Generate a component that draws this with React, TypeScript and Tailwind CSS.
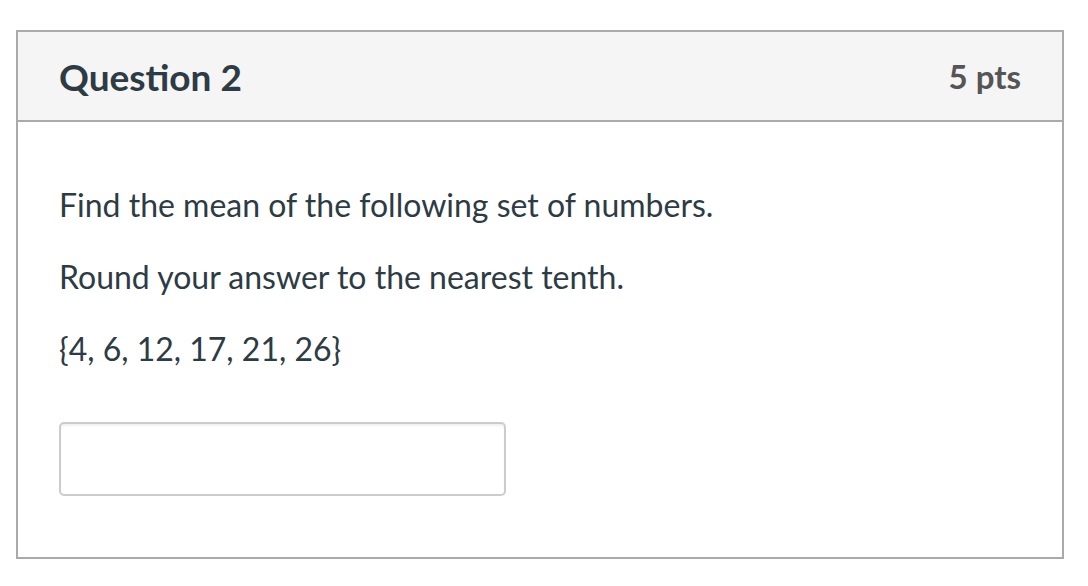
import React from "react";

export default function App() {
  return (
    <div className="w-[1088px] h-[586px] bg-white pt-[30px] pl-[16px]" style={{ fontFamily: "Lato, 'Open Sans', sans-serif" }}>
      <div className="w-[1048px] border-2 border-[#aaaaaa] bg-white">
        <div className="h-[90px] bg-[#f5f5f5] border-b-2 border-[#aaaaaa] flex items-center justify-between pl-[41px] pr-[41px]">
          <h2 className="text-[37px] font-bold text-[#2d3b45] leading-none">Question 2</h2>
          <div className="text-[33px] font-bold text-[#555555] leading-none">5 pts</div>
        </div>
        <div className="pl-[41px] pr-[41px] pt-[59px] pb-[61px] text-[#2d3b45]">
          <div className="flex flex-col gap-[24px] text-[32px] leading-[48px]">
            <p>Find the mean of the following set of numbers.</p>
            <p>Round your answer to the nearest tenth.</p>
            <p>{"{4, 6, 12, 17, 21, 26}"}</p>
          </div>
          <div className="mt-[49px] w-[447px] h-[74px] rounded-[5px] border-2 border-[#cccccc] bg-white shadow-[inset_0_2px_2px_rgba(0,0,0,0.06)]" />
        </div>
      </div>
    </div>
  );
}
